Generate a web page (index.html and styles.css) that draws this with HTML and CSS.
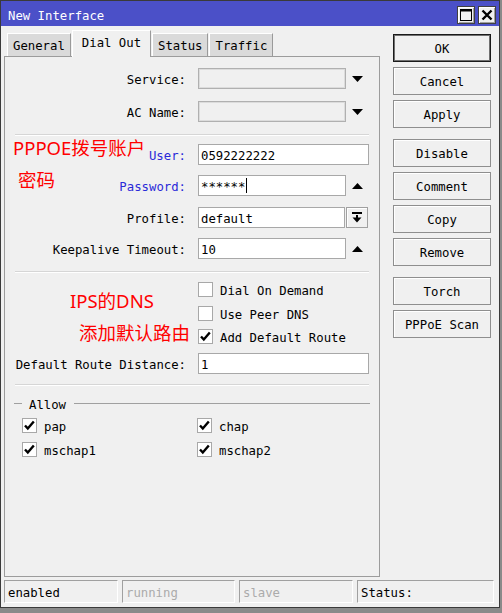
FILE: index.html
```html
<!DOCTYPE html>
<html lang="en">
<head>
<meta charset="utf-8">
<title>New Interface</title>
<link rel="stylesheet" href="styles.css">
</head>
<body>
<div class="window">
  <div class="titlebar">
    <span class="title">New Interface</span>
    <div class="tb-btns">
      <span class="tb-btn"><svg width="12" height="12" viewBox="0 0 12 12"><rect x="0.5" y="0.5" width="11" height="11" fill="none" stroke="#000" stroke-width="1"/><rect x="0" y="0" width="12" height="2.5" fill="#000"/></svg></span>
      <span class="tb-btn"><svg width="12" height="12" viewBox="0 0 12 12"><path d="M1.5 1.5 L10.5 10.5 M10.5 1.5 L1.5 10.5" stroke="#000" stroke-width="2.4" fill="none"/></svg></span>
    </div>
  </div>
  <div class="main">
    <div class="left">
      <div class="tabs">
        <span class="tab">General</span>
        <span class="tab active">Dial Out</span>
        <span class="tab">Status</span>
        <span class="tab">Traffic</span>
      </div>
      <div class="panel">
        <div class="row first">
          <span class="lbl">Service:</span>
          <div class="field off"></div>
          <span class="arrow"><svg width="11" height="6" viewBox="0 0 11 6"><polygon points="0,0 11,0 5.5,6" fill="#000"/></svg></span>
        </div>
        <div class="row gap12">
          <span class="lbl">AC Name:</span>
          <div class="field off"></div>
          <span class="arrow"><svg width="11" height="6" viewBox="0 0 11 6"><polygon points="0,0 11,0 5.5,6" fill="#000"/></svg></span>
        </div>
        <div class="sep gap12"></div>
        <div class="row gap8">
          <span class="lbl blue">User:</span>
          <div class="field wide">0592222222</div>
        </div>
        <div class="row gap10">
          <span class="lbl blue">Password:</span>
          <div class="field">******<span class="caret"></span></div>
          <span class="arrow"><svg width="11" height="6" viewBox="0 0 11 6"><polygon points="0,6 11,6 5.5,0" fill="#000"/></svg></span>
        </div>
        <div class="row gap11">
          <span class="lbl">Profile:</span>
          <div class="field short">default</div>
          <span class="dropbtn"><svg width="10" height="11" viewBox="0 0 10 11"><rect x="0" y="0" width="10" height="2" fill="#000"/><rect x="4" y="3" width="2" height="3" fill="#000"/><polygon points="0.5,5.5 9.5,5.5 5,10.5" fill="#000"/></svg></span>
        </div>
        <div class="row gap10">
          <span class="lbl">Keepalive Timeout:</span>
          <div class="field">10</div>
          <span class="arrow"><svg width="11" height="6" viewBox="0 0 11 6"><polygon points="0,6 11,6 5.5,0" fill="#000"/></svg></span>
        </div>
        <div class="sep gap12"></div>
        <div class="check-row gap9">
          <span class="box"></span><span class="ctext">Dial On Demand</span>
        </div>
        <div class="check-row gap9">
          <span class="box"></span><span class="ctext">Use Peer DNS</span>
        </div>
        <div class="check-row gap8">
          <span class="box"><svg width="13" height="13" viewBox="0 0 13 13"><polyline points="2,6.5 4.8,9.5 10.8,2.5" fill="none" stroke="#000" stroke-width="2.4"/></svg></span><span class="ctext">Add Default Route</span>
        </div>
        <div class="row gap9">
          <span class="lbl">Default Route Distance:</span>
          <div class="field wide">1</div>
        </div>
        <div class="sep gap10"></div>
        <div class="legend">
          <span class="dash"></span><span class="legend-text">Allow</span><span class="legend-line"></span>
        </div>
        <div class="allow">
          <div class="acheck"><span class="box"><svg width="13" height="13" viewBox="0 0 13 13"><polyline points="2,6.5 4.8,9.5 10.8,2.5" fill="none" stroke="#000" stroke-width="2.4"/></svg></span><span class="ctext">pap</span></div>
          <div class="acheck"><span class="box"><svg width="13" height="13" viewBox="0 0 13 13"><polyline points="2,6.5 4.8,9.5 10.8,2.5" fill="none" stroke="#000" stroke-width="2.4"/></svg></span><span class="ctext">chap</span></div>
          <div class="acheck"><span class="box"><svg width="13" height="13" viewBox="0 0 13 13"><polyline points="2,6.5 4.8,9.5 10.8,2.5" fill="none" stroke="#000" stroke-width="2.4"/></svg></span><span class="ctext">mschap1</span></div>
          <div class="acheck"><span class="box"><svg width="13" height="13" viewBox="0 0 13 13"><polyline points="2,6.5 4.8,9.5 10.8,2.5" fill="none" stroke="#000" stroke-width="2.4"/></svg></span><span class="ctext">mschap2</span></div>
        </div>
      </div>
    </div>
    <div class="buttons">
      <span class="btn default">OK</span>
      <span class="btn">Cancel</span>
      <span class="btn group-end">Apply</span>
      <span class="btn">Disable</span>
      <span class="btn">Comment</span>
      <span class="btn">Copy</span>
      <span class="btn group-end">Remove</span>
      <span class="btn">Torch</span>
      <span class="btn">PPPoE Scan</span>
    </div>
  </div>
  <div class="statusbar">
    <span class="cell">enabled</span>
    <span class="cell dim">running</span>
    <span class="cell dim">slave</span>
    <span class="cell">Status:</span>
  </div>
</div>
<div class="note n1">PPPOE拨号账户</div>
<div class="note n2">密码</div>
<div class="note n3">IPS的DNS</div>
<div class="note n4">添加默认路由</div>
</body>
</html>
```

FILE: styles.css
```css
* { box-sizing: border-box; }
html, body { margin: 0; padding: 0; }
body {
  position: relative;
  width: 502px;
  height: 613px;
  overflow: hidden;
  background: #8a8a8a;
  font-family: "DejaVu Sans Mono", "Liberation Mono", monospace;
  font-size: 12.3px;
  color: #000;
}
.window {
  width: 500px;
  height: 608px;
  border: 1px solid #3a3a3a;
  background: #f0f0f0;
  display: flex;
  flex-direction: column;
}
.titlebar {
  height: 25px;
  flex: none;
  background: #4b50c8;
  color: #fff;
  display: flex;
  align-items: center;
  justify-content: space-between;
  padding: 2px 3px 0 7px;
}
.title { padding-top: 3px; }
.tb-btns { display: flex; gap: 3px; }
.tb-btn {
  width: 18px;
  height: 18px;
  border: 1px solid #404040;
  background: #f0f0f0;
  box-shadow: inset 1px 1px #fff, inset -1px -1px #a0a0a0;
  display: flex;
  align-items: center;
  justify-content: center;
}
.main {
  display: flex;
  height: 552px;
  flex: none;
  padding-top: 4px;
}
.left {
  margin-left: 3px;
  width: 376px;
  display: flex;
  flex-direction: column;
}
.tabs {
  height: 26px;
  display: flex;
  align-items: flex-end;
  padding-left: 3px;
}
.tab {
  height: 23px;
  padding: 2px 5px 0;
  background: #dadada;
  border: 1px solid;
  border-color: #fff #9a9a9a transparent #fff;
  border-bottom: none;
  display: flex;
  align-items: center;
  white-space: pre;
}
.tab + .tab { margin-left: 1px; }
.tab.active {
  height: 27px;
  margin-bottom: -1px;
  padding: 0 9px 2px;
  background: #f0f0f0;
  position: relative;
  z-index: 1;
}
.panel {
  height: 521px;
  border: 1px solid #9c9c9c;
  background: #f0f0f0;
  padding-top: 11px;
}
.row {
  display: flex;
  align-items: center;
  height: 21px;
}
.lbl {
  width: 181px;
  flex: none;
  text-align: right;
  white-space: pre;
  padding-top: 2px;
}
.lbl.blue { color: #2a2ad8; }
.field {
  margin-left: 12px;
  width: 148px;
  height: 21px;
  border: 1px solid #a8a8a8;
  background: #fff;
  padding: 2px 0 0 2px;
  display: flex;
  align-items: center;
  white-space: pre;
}
.field.wide { width: 171px; }
.field.short { width: 147px; }
.field.off {
  background: #f0f0f0;
  border-color: #b0b0b0;
  box-shadow: inset 0 0 0 1px #dcdcdc;
}
.caret {
  width: 1px;
  height: 15px;
  background: #000;
  margin-left: 1px;
  margin-top: -2px;
}
.arrow {
  width: 23px;
  display: flex;
  justify-content: center;
}
.dropbtn {
  margin-left: 1px;
  width: 22px;
  height: 21px;
  border: 1px solid #a0a0a0;
  background: #f0f0f0;
  box-shadow: inset 1px 1px #fff;
  display: flex;
  align-items: center;
  justify-content: center;
}
.sep {
  height: 2px;
  margin-left: 10px;
  margin-right: 10px;
  border-top: 1px solid #d6d6d6;
  border-bottom: 1px solid #fff;
}
.gap8 { margin-top: 8px; }
.gap9 { margin-top: 9px; }
.gap10 { margin-top: 10px; }
.gap11 { margin-top: 11px; }
.gap12 { margin-top: 12px; }
.check-row {
  display: flex;
  align-items: center;
  height: 15px;
  padding-left: 193px;
}
.box {
  width: 15px;
  height: 15px;
  flex: none;
  border: 1px solid #a8a8a8;
  background: #fff;
  display: flex;
  align-items: center;
  justify-content: center;
}
.ctext {
  margin-left: 7px;
  white-space: pre;
  padding-top: 2px;
}
.legend {
  display: flex;
  align-items: center;
  height: 15px;
  margin-top: 10px;
  padding: 0 9px;
}
.dash { width: 8px; height: 1px; background: #a0a0a0; }
.legend-text { margin: 0 8px 0 7px; padding-top: 2px; }
.legend-line { flex: 1; height: 1px; background: #a0a0a0; }
.allow {
  display: grid;
  grid-template-columns: 175px auto;
  row-gap: 9px;
  margin-top: 7px;
  padding-left: 17px;
}
.acheck {
  display: flex;
  align-items: center;
  height: 15px;
}
.buttons {
  margin-left: 13px;
  padding-top: 4px;
  width: 98px;
  display: flex;
  flex-direction: column;
}
.btn {
  height: 28px;
  flex: none;
  margin-bottom: 5px;
  border: 1px solid #8e8e8e;
  background: #f0f0f0;
  box-shadow: inset 1px 1px #fff;
  display: flex;
  align-items: center;
  justify-content: center;
  white-space: pre;
  padding-top: 2px;
}
.btn.default {
  border-color: #1a1a1a;
  box-shadow: inset 0 0 0 1px #707070;
}
.btn.group-end { margin-bottom: 11px; }
.statusbar {
  margin-top: 2px;
  padding-left: 3px;
  height: 23px;
  flex: none;
  display: grid;
  grid-template-columns: 114px 113px 114px 137px;
  column-gap: 4px;
}
.cell {
  border-top: 1px solid #a0a0a0;
  border-left: 1px solid #a0a0a0;
  border-bottom: 1px solid #fff;
  border-right: 1px solid #fff;
  padding: 2px 0 0 3px;
  display: flex;
  align-items: center;
  white-space: pre;
}
.cell.dim { color: #ababab; }
.note {
  position: absolute;
  font-family: "Noto Sans", "Noto Sans CJK SC", sans-serif;
  font-size: 18.5px;
  line-height: 20px;
  color: #ff0000;
  white-space: nowrap;
}
.n1 { left: 13px; top: 138px; }
.n2 { left: 18px; top: 170px; }
.n3 { left: 70px; top: 291px; }
.n4 { left: 79px; top: 323px; }
```
